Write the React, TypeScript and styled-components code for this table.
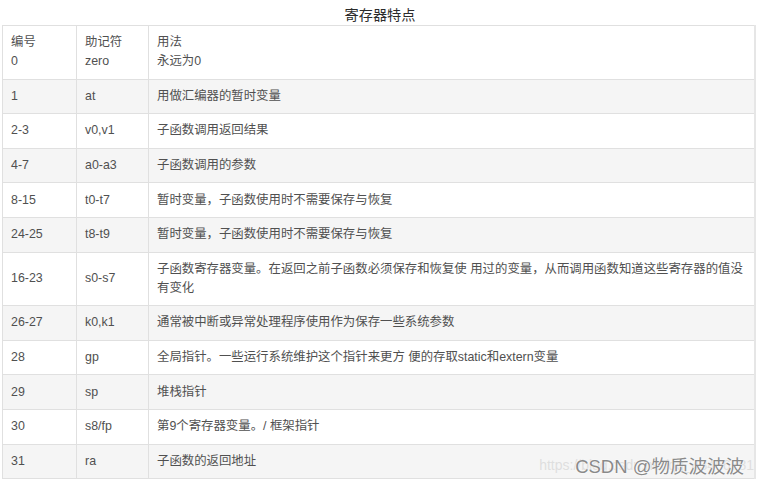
import React from "react";
import styled, { createGlobalStyle } from "styled-components";

const Global = createGlobalStyle`
  html, body { margin: 0; padding: 0; background: #ffffff; }
  body { font-family: "Liberation Sans", Arial, "Noto Sans CJK SC", sans-serif; }
`;

const Page = styled.div`
  position: relative;
  width: 760px;
  height: 484px;
  overflow: hidden;
  background: #ffffff;
`;

const Title = styled.div`
  padding-top: 5px;
  height: 20px;
  line-height: 20px;
  text-align: center;
  font-size: 14.2px;
  color: #2b2b2b;
  font-family: "Liberation Sans", "Noto Sans CJK SC", sans-serif;
`;

const Table = styled.table`
  margin-left: 2px;
  width: 754px;
  border-collapse: collapse;
  table-layout: fixed;
  border: 1px solid #dddddd;
  border-right: 2px solid #e6e6e6;
`;

const Row = styled.tr<{ $alt: boolean }>`
  background: ${(p) => (p.$alt ? "#f5f5f5" : "#ffffff")};
`;

const Cell = styled.td`
  border: 1px solid #e0e0e0;
  padding: 7.3px 8px;
  line-height: 19px;
  font-size: 12.4px;
  color: #505050;
  vertical-align: middle;
  white-space: nowrap;
  font-family: "Liberation Sans", Arial, "Noto Sans CJK SC", sans-serif;
`;

const Watermark = styled.div`
  position: absolute;
  right: 16px;
  bottom: 8px;
  height: 22px;
  display: flex;
  align-items: center;
`;

const UrlMark = styled.span`
  position: absolute;
  right: -10px;
  top: 3px;
  font-size: 14px;
  color: rgba(200, 200, 200, 0.5);
  white-space: nowrap;
  font-family: "Liberation Sans", sans-serif;
`;

const CsdnMark = styled.span`
  position: relative;
  font-size: 18.5px;
  color: #8a8a8a;
  white-space: nowrap;
  text-shadow: 0 0 1px #ffffff, 0 0 2px #ffffff;
  font-family: "Liberation Sans", "Noto Sans CJK SC", sans-serif;
`;

type Item = { no: string; name: string; use: React.ReactNode };

const rows: Item[] = [
  { no: "1", name: "at", use: "用做汇编器的暂时变量" },
  { no: "2-3", name: "v0,v1", use: "子函数调用返回结果" },
  { no: "4-7", name: "a0-a3", use: "子函数调用的参数" },
  { no: "8-15", name: "t0-t7", use: "暂时变量，子函数使用时不需要保存与恢复" },
  { no: "24-25", name: "t8-t9", use: "暂时变量，子函数使用时不需要保存与恢复" },
  {
    no: "16-23",
    name: "s0-s7",
    use: (
      <>
        子函数寄存器变量。在返回之前子函数必须保存和恢复使 用过的变量，从而调用函数知道这些寄存器的值没
        <br />
        有变化
      </>
    ),
  },
  { no: "26-27", name: "k0,k1", use: "通常被中断或异常处理程序使用作为保存一些系统参数" },
  { no: "28", name: "gp", use: "全局指针。一些运行系统维护这个指针来更方 便的存取static和extern变量" },
  { no: "29", name: "sp", use: "堆栈指针" },
  { no: "30", name: "s8/fp", use: "第9个寄存器变量。/ 框架指针" },
  { no: "31", name: "ra", use: "子函数的返回地址" },
];

export default function App() {
  return (
    <Page>
      <Global />
      <Title>寄存器特点</Title>
      <Table>
        <colgroup>
          <col style={{ width: 74 }} />
          <col style={{ width: 72 }} />
          <col />
        </colgroup>
        <tbody>
          <Row $alt={false}>
            <Cell>
              编号
              <br />0
            </Cell>
            <Cell>
              助记符
              <br />
              zero
            </Cell>
            <Cell>
              用法
              <br />
              永远为0
            </Cell>
          </Row>
          {rows.map((r, i) => (
            <Row key={r.no} $alt={i % 2 === 0}>
              <Cell>{r.no}</Cell>
              <Cell>{r.name}</Cell>
              <Cell>{r.use}</Cell>
            </Row>
          ))}
        </tbody>
      </Table>
      <Watermark>
        <UrlMark>https://blog.csdn.net/qq_43466781</UrlMark>
        <CsdnMark>CSDN @物质波波波</CsdnMark>
      </Watermark>
    </Page>
  );
}
